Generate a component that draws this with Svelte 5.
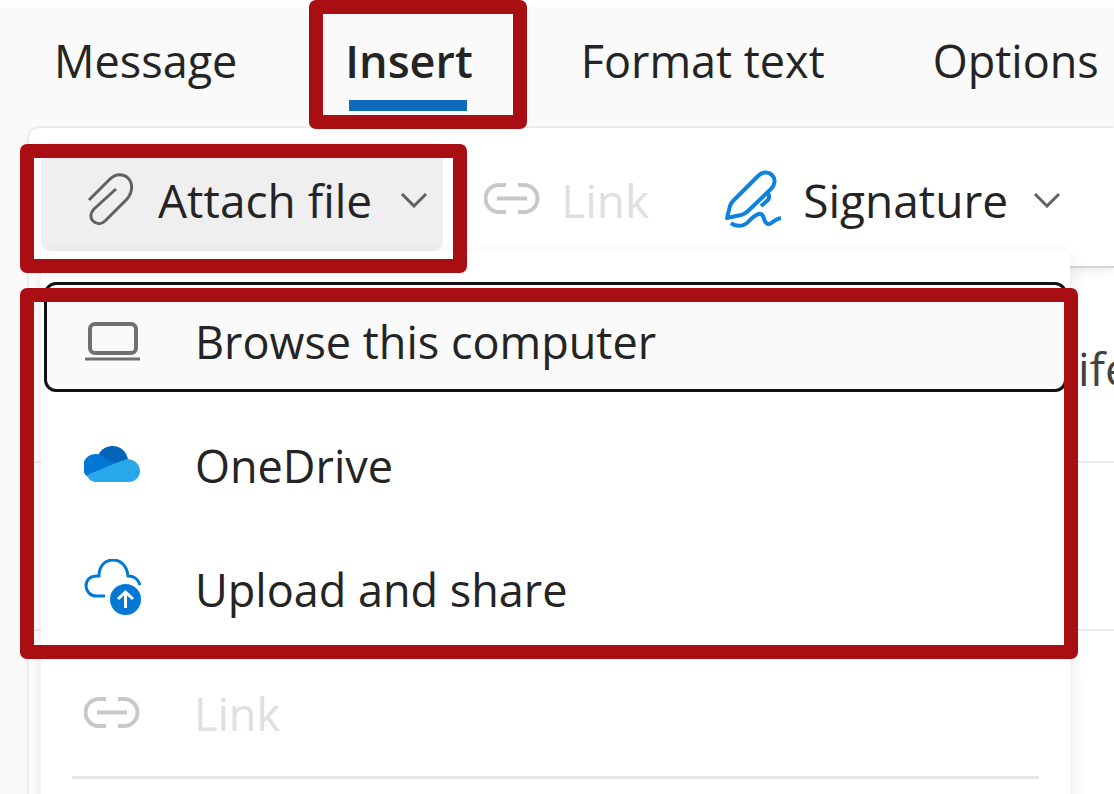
<script>
  const tabs = ['Message', 'Insert', 'Format text', 'Options'];
  let activeTab = $state('Insert');
  let menuOpen = $state(true);
</script>

{#snippet chevron()}
  <svg class="chevron" width="28" height="16" viewBox="0 0 28 16" aria-hidden="true">
    <path d="M2 2L14 14L26 2" />
  </svg>
{/snippet}

{#snippet linkIcon()}
  <svg class="icon-link" width="56" height="34" viewBox="14 22 56 34" aria-hidden="true">
    <path d="M36 24H29a13 13 0 0 0 0 27h7M48 24h6a13 13 0 0 1 0 27h-6" />
    <path d="M27 37.5H57" />
  </svg>
{/snippet}

<div class="window">
  <nav class="tabs">
    {#each tabs as tab}
      <button class="tab" class:active={tab === activeTab} onclick={() => (activeTab = tab)}>
        {tab}
        {#if tab === 'Insert'}<span class="mark mark-tab"></span>{/if}
      </button>
    {/each}
  </nav>

  <main class="compose">
    <div class="ribbon">
      <div class="attach-wrap">
        <button class="tool attach" aria-expanded={menuOpen} onclick={() => (menuOpen = !menuOpen)}>
          <svg class="icon-clip" width="48" height="54" viewBox="16 12 48 54" aria-hidden="true">
            <path d="M19 39L40 18C46 12 54 13 58 17C63 22 63 31 57 38L35 60C31 64 26 63 23 60C20 57 20 52 24 48L46 28" />
          </svg>
          <span>Attach file</span>
          {@render chevron()}
        </button>
        <span class="mark mark-attach"></span>

        {#if menuOpen}
          <div class="menu">
            <div class="group">
              <button class="item focused">
                <svg width="57" height="42" viewBox="14 10 57 42" fill="none" stroke="#707070" stroke-width="4" aria-hidden="true">
                  <rect x="20" y="13" width="46" height="29" rx="5" />
                  <path d="M15 48H70" stroke-width="3" />
                </svg>
                <span>Browse this computer</span>
              </button>
              <button class="item">
                <svg width="57" height="42" viewBox="14 13 57 42" aria-hidden="true">
                  <path d="M28 24C31 16 38 14 43 14C50 14 56 19 58 27L45 33Z" fill="#0364b8" />
                  <path d="M18 45C14 42 13 39 13 35C13 28 18 22 26 22C30 22 32 24 35 26L46 32L24 48Z" fill="#0078d4" />
                  <path d="M17 43L46 31L57 27C64 27 70 32 70 39C70 45 65 50 59 50H26C22 50 19 48 17 43Z" fill="#28a8ea" />
                </svg>
                <span>OneDrive</span>
              </button>
              <button class="item">
                <svg width="57" height="62" viewBox="13 13 57 62" fill="none" aria-hidden="true">
                  <path d="M34 50H25C19 50 15 45 15 40C15 34 19 30 26 30H28C28 20 34 14 42 14C50 14 56 20 57 30C64 30 67 33 69 39" stroke="#0078d4" stroke-width="3" />
                  <circle cx="54.5" cy="53.5" r="15.5" fill="#0078d4" />
                  <path d="M54.5 62V46M47 53L54.5 46L62 53" stroke="#fff" stroke-width="3" />
                </svg>
                <span>Upload and share</span>
              </button>
              <span class="mark mark-group"></span>
            </div>
            <button class="item" disabled>
              {@render linkIcon()}
              <span>Link</span>
            </button>
            <hr />
          </div>
        {/if}
      </div>

      <button class="tool link" disabled>
        {@render linkIcon()}
        <span>Link</span>
      </button>

      <button class="tool signature">
        <svg class="icon-pen" width="57" height="62" viewBox="256 8 57 62" aria-hidden="true">
          <path d="M258 57L261 45Q262 42 264 40L289 15C293 11 299 10 303 14C307 18 306 24 302 28L279 50Q276 53 272 54Z" />
          <path d="M298 31C301 34 301 37 298 40L292 45M262 62C267 66 275 66 280 60C285 55 291 50 294 55C296 59 295 62 299 63C303 64 304 58 312 57" />
        </svg>
        <span>Signature</span>
        {@render chevron()}
      </button>
    </div>

    <div class="fields">
      <div class="row recipients"><span>ife</span></div>
      <div class="row"></div>
    </div>
  </main>
</div>

<style>
  :global(body) {
    margin: 0;
    background: #fff;
  }

  .window {
    display: flex;
    flex-direction: column;
    box-sizing: border-box;
    height: 100vh;
    overflow: hidden;
    padding-top: 7px;
    background: linear-gradient(#fff 7px, #fafafa 7px);
    color: #242424;
    font-family: 'Open Sans', 'Noto Sans', sans-serif;
    font-size: 46px;
    line-height: 60px;
  }

  button {
    margin: 0;
    border: 0;
    background: none;
    color: inherit;
    font: inherit;
    white-space: nowrap;
    cursor: pointer;
  }

  .tabs {
    display: flex;
    gap: 108px;
    padding: 24px 0 15px 54px;
    font-size: 45px;
  }

  .tab {
    position: relative;
    padding: 0 0 20px;
  }

  .tab.active {
    font-weight: 600;
  }

  .tab.active::after {
    content: '';
    position: absolute;
    right: 6px;
    bottom: 0;
    left: 4px;
    height: 11px;
    background: #0f6cbd;
  }

  .compose {
    flex: 1;
    margin-left: 27px;
    border: 2px solid #eee;
    border-width: 2px 0 0 2px;
    border-radius: 12px 0 0 0;
    background: #fff;
  }

  .ribbon {
    display: flex;
    align-items: center;
    padding: 15px 0 15px 12px;
    border-bottom: 2px solid #d6d6d6;
    border-radius: 12px 0 0 0;
    box-shadow: 0 4px 8px rgba(0, 0, 0, 0.07);
  }

  .attach-wrap {
    position: relative;
  }

  .tool {
    display: flex;
    align-items: center;
    gap: 21px;
    height: 108px;
    padding: 5px 0 0;
  }

  .attach {
    gap: 24px;
    padding: 5px 15px 0 45px;
    border-radius: 10px;
    background: #efefef;
  }

  .link {
    margin-left: 41px;
  }

  .signature {
    margin-left: 76px;
  }

  button:disabled {
    color: #e0e0e0;
    cursor: default;
  }

  svg {
    flex: none;
  }

  .chevron,
  .icon-clip,
  .icon-link,
  .icon-pen {
    fill: none;
    stroke: #616161;
    stroke-width: 3;
  }

  .chevron {
    margin-left: 4px;
  }

  .icon-link {
    stroke: #c8c8c8;
    stroke-width: 4;
  }

  .icon-pen {
    stroke: #0f82dc;
    stroke-width: 4;
    stroke-linejoin: round;
  }

  .menu {
    position: absolute;
    z-index: 1;
    top: 100%;
    left: 0;
    box-sizing: border-box;
    width: calc(100vw - 85px);
    padding: 31px 3px;
    background: #fff;
    box-shadow: 0 6px 18px rgba(0, 0, 0, 0.1);
    font-size: 45px;
  }

  .group {
    position: relative;
    margin-bottom: 14px;
  }

  .item {
    display: flex;
    align-items: center;
    gap: 54px;
    box-sizing: border-box;
    width: 100%;
    height: 110px;
    padding: 9px 37px 0;
    border: 3px solid transparent;
    border-radius: 12px;
  }

  .item + .item {
    margin-top: 14px;
  }

  .item.focused {
    border-color: #111;
    background: #fafafa;
  }

  hr {
    height: 3px;
    margin: 12px 28px;
    border: 0;
    background: #e6e6e6;
  }

  .row {
    box-sizing: border-box;
    height: 168px;
    border-bottom: 2px solid #ededed;
  }

  .recipients {
    display: flex;
    justify-content: flex-end;
    align-items: center;
    height: 195px;
    padding-top: 6px;
    color: #424242;
  }

  .recipients span {
    width: 36px;
    overflow: hidden;
  }

  /* red call-out frames laid over the controls */
  .mark {
    position: absolute;
    z-index: 2;
    border: 14px solid #a80e12;
    border-radius: 7px;
    pointer-events: none;
  }

  .mark-tab {
    inset: -31px -54px -18px -36px;
  }

  .mark-attach {
    inset: 1px -24px -22px -21px;
  }

  .mark-group {
    inset: 6px -11px -19px -24px;
  }
</style>
